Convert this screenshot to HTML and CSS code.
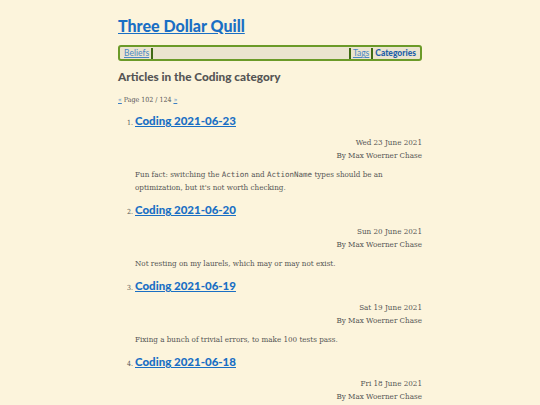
FILE: index.html
```html
<!DOCTYPE html>
<html>
<head>
<meta charset="utf-8">
<link rel="stylesheet" href="styles.css">
</head>
<body>
<div class="page">
  <h1 class="site-title"><a href="#">Three Dollar Quill</a></h1>
  <nav class="nav">
    <a class="nav-link" href="#">Beliefs</a>
    <span class="nav-sep"></span>
    <span class="nav-fill"></span>
    <span class="nav-sep"></span>
    <a class="nav-link" href="#">Tags</a>
    <span class="nav-sep"></span>
    <a class="nav-link current" href="#">Categories</a>
  </nav>
  <h2 class="cat-title">Articles in the Coding category</h2>
  <p class="pager"><a href="#">«</a> Page 102 / 124 <a href="#">»</a></p>
  <ol class="articles">
    <li class="article">
      <h3 class="art-title"><a href="#">Coding 2021-06-23</a></h3>
      <div class="meta"><div>Wed 23 June 2021</div><div>By Max Woerner Chase</div></div>
      <p class="summary">Fun fact: switching the <code>Action</code> and <code>ActionName</code> types should be an optimization, but it's not worth checking.</p>
    </li>
    <li class="article">
      <h3 class="art-title"><a href="#">Coding 2021-06-20</a></h3>
      <div class="meta"><div>Sun 20 June 2021</div><div>By Max Woerner Chase</div></div>
      <p class="summary">Not resting on my laurels, which may or may not exist.</p>
    </li>
    <li class="article">
      <h3 class="art-title"><a href="#">Coding 2021-06-19</a></h3>
      <div class="meta"><div>Sat 19 June 2021</div><div>By Max Woerner Chase</div></div>
      <p class="summary">Fixing a bunch of trivial errors, to make 100 tests pass.</p>
    </li>
    <li class="article">
      <h3 class="art-title"><a href="#">Coding 2021-06-18</a></h3>
      <div class="meta"><div>Fri 18 June 2021</div><div>By Max Woerner Chase</div></div>
    </li>
  </ol>
</div>
</body>
</html>
```
FILE: styles.css
```css
html, body {
  margin: 0;
  padding: 0;
  background: #fcf4dc;
}
body {
  font-family: "DejaVu Serif Condensed", "DejaVu Serif", serif;
  color: #555;
  font-size: 8px;
}
.page {
  width: 304px;
  margin: 0 auto;
  padding-top: 14px;
}
.site-title {
  margin: 0;
  font-family: Lato, sans-serif;
  font-weight: 900;
  font-size: 16px;
  line-height: 24px;
}
.site-title a {
  color: #1a6fc4;
}
.nav {
  margin-top: 7px;
  display: flex;
  align-items: center;
  height: 12px;
  padding: 0 2px;
  border: 2px solid #6b9a28;
  border-radius: 3px;
  background: #ebe4cf;
  font-family: Lato, sans-serif;
  font-size: 8.5px;
}
.nav-link {
  color: #4a86c4;
  padding: 0 2px;
}
.nav-link.current {
  color: #1f5fa8;
  font-weight: 900;
  text-decoration: none;
}
.nav-sep {
  width: 2px;
  height: 11px;
  background: #3f6a14;
}
.nav-fill {
  flex: 1;
}
.cat-title {
  margin: 7px 0 0;
  font-family: Lato, sans-serif;
  font-weight: 900;
  font-size: 11.8px;
  line-height: 18px;
  color: #555;
}
.pager {
  margin: 9px 0 0;
  font-size: 7px;
  line-height: 10px;
}
.pager a {
  color: #3b7fc4;
}
.articles {
  margin: 0;
  padding: 0 0 0 17px;
}
.article {
  font-size: 7px;
}
.art-title {
  margin: 6px 0 0;
  font-family: Lato, sans-serif;
  font-weight: 900;
  font-size: 11.5px;
  line-height: 19px;
}
.art-title a {
  color: #1a6fc4;
}
.meta {
  margin-top: 6px;
  text-align: right;
  font-size: 8px;
  line-height: 13px;
}
.summary {
  margin: 6px 0 0;
  font-size: 8px;
  line-height: 13px;
}
code {
  font-family: "DejaVu Sans Mono", monospace;
  font-size: 7.5px;
  line-height: 1;
}
```
